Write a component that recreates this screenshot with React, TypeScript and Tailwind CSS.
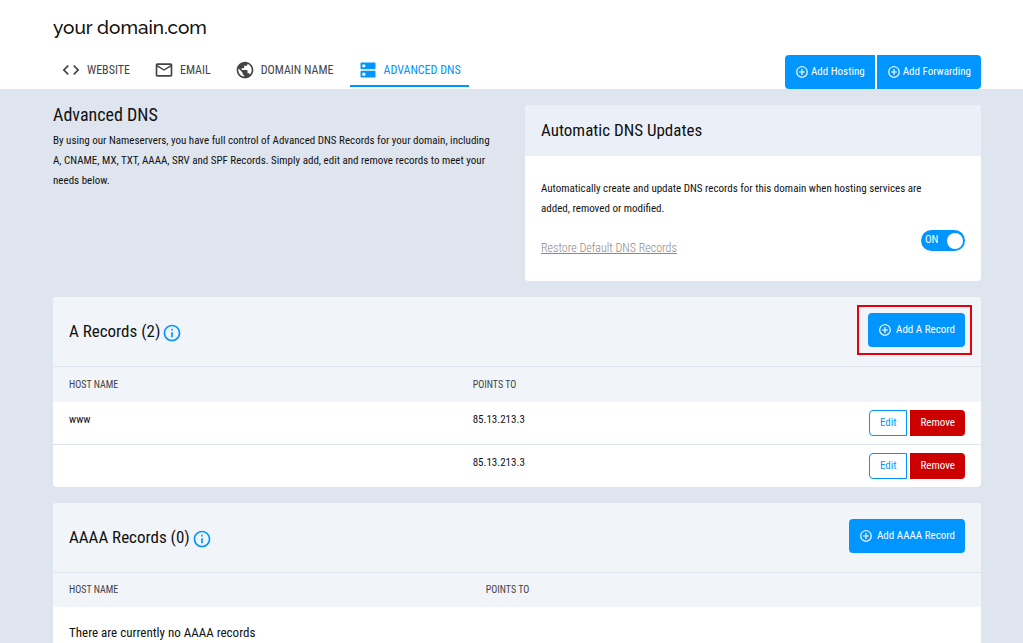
import React, { useState } from "react";
import clsx from "clsx";
import {
  MdCode,
  MdControlPoint,
  MdDns,
  MdInfoOutline,
  MdMailOutline,
  MdPublic,
} from "react-icons/md";

const tabs = [
  { label: "WEBSITE", icon: MdCode },
  { label: "EMAIL", icon: MdMailOutline },
  { label: "DOMAIN NAME", icon: MdPublic },
  { label: "ADVANCED DNS", icon: MdDns },
];

const aRecords = [
  { host: "www", target: "85.13.213.3" },
  { host: "", target: "85.13.213.3" },
];

function AddButton({ label, className }: { label: string; className?: string }) {
  return (
    <button
      type="button"
      className={clsx(
        "flex h-[34px] items-center bg-[#0095ff] px-2.5 text-[11px] leading-4 text-white",
        className
      )}
    >
      <MdControlPoint className="size-3.5 shrink-0" />
      {label}
    </button>
  );
}

function RecordsCard({
  title,
  count,
  action,
  firstCol,
  children,
}: {
  title: string;
  count: number;
  action: React.ReactNode;
  firstCol: string;
  children: React.ReactNode;
}) {
  return (
    <section className="mt-4 overflow-hidden rounded bg-white">
      <div className="flex h-[69px] items-start justify-between bg-[#f1f5fa] p-4">
        <h2 className="flex items-center gap-0.5 text-[17px] leading-9">
          {title} ({count})
          <button type="button" aria-label={`About ${title}`} className="mt-1 text-[#0095ff]">
            <MdInfoOutline className="size-5" />
          </button>
        </h2>
        {action}
      </div>
      <table className="w-full table-fixed text-left">
        <thead className="border-t border-[#dfe5ef] bg-[#f1f5fa] text-[10px] text-[#444]">
          <tr className="h-[35px]">
            <th className={clsx("px-4 font-normal", firstCol)}>HOST NAME</th>
            <th className="px-4 font-normal">POINTS TO</th>
            <td className="w-[150px]" />
          </tr>
        </thead>
        <tbody>{children}</tbody>
      </table>
    </section>
  );
}

export default function App() {
  const [activeTab, setActiveTab] = useState("ADVANCED DNS");
  const [autoUpdate, setAutoUpdate] = useState(true);

  return (
    <div className="min-h-screen bg-[#dfe5ef] font-['Roboto_Condensed','Roboto',sans-serif] text-[#111]">
      <header className="bg-white pt-[11px] pr-[42px] pl-[53px]">
        <h1 className="font-['Raleway','Lato',sans-serif] text-[19px] leading-8 font-medium">
          your domain.com
        </h1>
        <div className="mt-3 flex items-start justify-between">
          <nav className="flex gap-2">
            {tabs.map(({ label, icon: Icon }) => (
              <button
                key={label}
                type="button"
                onClick={() => setActiveTab(label)}
                className={clsx(
                  "flex h-8 items-center gap-1.5 border-b-2 px-2 text-[12px]",
                  activeTab === label
                    ? "border-[#0095ff] text-[#0095ff]"
                    : "border-transparent text-[#444]"
                )}
              >
                <Icon className="size-5" />
                {label}
              </button>
            ))}
          </nav>
          <div className="flex gap-0.5">
            <AddButton label="Add Hosting" className="gap-0.5 rounded-l" />
            <AddButton label="Add Forwarding" className="gap-0.5 rounded-r" />
          </div>
        </div>
      </header>

      <main className="pt-4 pr-[42px] pb-4 pl-[53px]">
        <div className="grid grid-cols-2 gap-4">
          <div>
            <h2 className="text-[18px] leading-5">Advanced DNS</h2>
            <p className="mt-1.5 text-[11px] leading-5">
              By using our Nameservers, you have full control of Advanced DNS Records for your
              domain, including
              <br />
              A, CNAME, MX, TXT, AAAA, SRV and SPF Records. Simply add, edit and remove records to
              meet your
              <br />
              needs below.
            </p>
          </div>

          <section className="overflow-hidden rounded bg-white">
            <h2 className="flex h-[51px] items-center bg-[#ebf0f8] px-4 text-[17px]">
              Automatic DNS Updates
            </h2>
            <div className="px-4 py-[23px]">
              <p className="text-[11px] leading-5">
                Automatically create and update DNS records for this domain when hosting services are
                <br />
                added, removed or modified.
              </p>
              <div className="mt-[11px] flex items-start justify-between">
                <a href="#restore" className="mt-2 text-[12px] leading-5 font-light text-[#888] underline">
                  Restore Default DNS Records
                </a>
                <label
                  className={clsx(
                    "flex h-[21px] w-11 cursor-pointer items-center justify-between rounded-full pr-0.5 pl-1 text-[11px] text-white",
                    autoUpdate ? "bg-[#0095ff]" : "flex-row-reverse bg-[#999]"
                  )}
                >
                  <input
                    type="checkbox"
                    aria-label="Automatic DNS Updates"
                    checked={autoUpdate}
                    onChange={(e) => setAutoUpdate(e.target.checked)}
                    className="sr-only"
                  />
                  {autoUpdate ? "ON" : "OFF"}
                  <span className="size-4 rounded-full bg-white" />
                </label>
              </div>
            </div>
          </section>
        </div>

        <RecordsCard
          title="A Records"
          count={aRecords.length}
          firstCol="w-[43.5%]"
          action={
            <div className="relative">
              <AddButton label="Add A Record" className="gap-1 rounded" />
              {/* call-out frame */}
              <div className="pointer-events-none absolute -top-2 -right-[7px] -bottom-2 -left-[11px] border-2 border-[#e6000a]" />
            </div>
          }
        >
          {aRecords.map((record, i) => (
            <tr key={i} className="border-[#dfe5ef] align-top text-[11px] leading-5 not-first:border-t">
              <td className="px-4 py-2">{record.host}</td>
              <td className="px-4 py-2">{record.target}</td>
              <td className="py-2 pr-4">
                <div className="flex justify-end gap-[3px]">
                  <button
                    type="button"
                    className="h-[26px] rounded-l border border-[#0095ff] px-2.5 text-[#0095ff]"
                  >
                    Edit
                  </button>
                  <button type="button" className="h-[26px] rounded-r bg-[#cc0000] px-2.5 text-white">
                    Remove
                  </button>
                </div>
              </td>
            </tr>
          ))}
        </RecordsCard>

        <RecordsCard
          title="AAAA Records"
          count={0}
          firstCol="w-[44.9%]"
          action={<AddButton label="Add AAAA Record" className="gap-1 rounded" />}
        >
          <tr>
            <td colSpan={3} className="px-4 py-4 text-[13px] leading-5">
              There are currently no AAAA records
            </td>
          </tr>
        </RecordsCard>
      </main>
    </div>
  );
}
